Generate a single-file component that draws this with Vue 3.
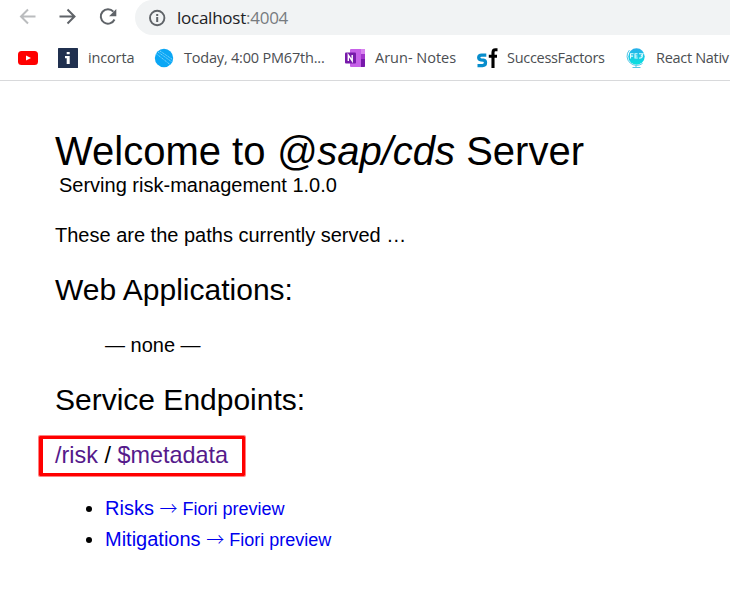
<script setup>
const services = ['Risks', 'Mitigations']
</script>

<template>
  <div class="window">
    <header class="chrome">
      <div class="toolbar">
        <svg class="nav" width="122" height="35" viewBox="0 0 122 35" fill="none" stroke-width="2">
          <path d="M35.5 16.5H21M28 9.5l-7 7 7 7" stroke="#babcbe" />
          <path d="M59.5 16.5H74M67.5 9.5l7 7-7 7" stroke="#5f6368" />
          <path d="M113.4 11.7A7.2 7.2 0 1 0 114.5 19.5" stroke="#5f6368" />
          <path d="M116.3 9v7.2h-7.2z" fill="#5f6368" />
        </svg>
        <div class="address">
          <svg width="18" height="18" viewBox="0 0 18 18">
            <circle cx="9.2" cy="9" r="7.2" fill="none" stroke="#5f6368" stroke-width="1.9" />
            <path d="M8.2 8h2v5h-2zM8.2 5h2v2h-2z" fill="#5f6368" />
          </svg>
          <span class="url">localhost<span class="port">:4004</span></span>
        </div>
      </div>
      <nav class="bookmarks">
        <svg class="youtube" width="20" height="20" viewBox="0 0 20 20">
          <rect y="3" width="20" height="14" rx="3.5" fill="#f00" />
          <path d="M8 7.4l5 2.6-5 2.6z" fill="#fff" />
        </svg>
        <a class="bookmark incorta">
          <svg width="20" height="20" viewBox="0 0 20 20">
            <rect width="20" height="20" rx=".5" fill="#20304f" />
            <path d="M8.7 4h3v2.3h-3zM7 8h4.7v8H8.7v-5.8H7z" fill="#fff" />
          </svg>
          <span>incorta</span>
        </a>
        <a class="bookmark today">
          <svg width="20" height="20" viewBox="0 0 20 20">
            <circle cx="10" cy="10" r="9.2" fill="#0ba7f5" />
            <g fill="none" stroke="#a5e2ff" stroke-width=".7" stroke-dasharray="1.3 .6">
              <path d="M2 5.5L16 16.5M4 4L18 14M6 3L18.5 11.5" />
            </g>
          </svg>
          <span>Today, 4:00 PM67th...</span>
        </a>
        <a class="bookmark notes">
          <svg width="20" height="20" viewBox="0 0 20 20">
            <rect x="5" y="1" width="15" height="18" rx="1" fill="#c660e8" />
            <path d="M16 1h3q1 0 1 1v4h-4z" fill="#d985ef" />
            <path d="M16 6h4v5h-4z" fill="#a336cc" />
            <path d="M16 11h4v7q0 1-1 1h-3z" fill="#7719aa" />
            <rect y="4.5" width="11" height="11" rx="1" fill="#7719aa" />
            <path d="M3.3 13V7l3.9 6V7" fill="none" stroke="#fff" stroke-width="1.4" />
          </svg>
          <span>Arun- Notes</span>
        </a>
        <a class="bookmark success">
          <svg width="21" height="20" viewBox="0 0 21 20">
            <path d="M9.3 7.2H4.6q-2.9 0-2.9 2.4 0 1.9 2.4 2.3l2.3.3q2.1.4 2.1 2.4 0 3-3 3H.5" fill="none" stroke="#078dcc" stroke-width="3.3" />
            <path d="M20.5 1.7h-2.1q-2.4 0-2.4 2.7V20M11.8 8.2h8.2" fill="none" stroke="#000" stroke-width="3.1" />
          </svg>
          <span>SuccessFactors</span>
        </a>
        <a class="bookmark react">
          <svg width="20" height="20" viewBox="0 0 20 20">
            <defs>
              <linearGradient id="globe" x2="0" y2="1">
                <stop stop-color="#28aeea" />
                <stop offset="1" stop-color="#08e3df" />
              </linearGradient>
            </defs>
            <circle cx="10.5" cy="8.5" r="8.2" fill="url(#globe)" />
            <path d="M3.4 2.1A9 9 0 0 0 4.2 15Q10 19.5 16.5 15.5M10 17v2.5M6.5 19.5h8" fill="none" stroke="#52c6e8" stroke-width="1" />
            <path d="M4.5 10.5V5.8H7.5M4.5 8.1h2.6M11.5 5.8H9v4.2h2.7M9 8h2.4M13 5.8h4l-1.6 1.9h1q0 2.4-3.2 2.4" fill="none" stroke="#dffcff" stroke-width="1.1" />
          </svg>
          <span>React Nativ</span>
        </a>
      </nav>
    </header>

    <main>
      <h1>Welcome to <i>@sap/cds</i> Server</h1>
      <p class="subtitle">Serving risk-management 1.0.0</p>
      <p class="intro">These are the paths currently served …</p>
      <h2 class="apps">Web Applications:</h2>
      <p class="none">— none —</p>
      <h2 class="endpoints">Service Endpoints:</h2>
      <h3><a>/risk</a> / <a>$metadata</a></h3>
      <ul>
        <li v-for="service in services" :key="service">
          <a>{{ service }}</a> <a class="preview"><span class="arrow">→</span> Fiori preview</a>
        </li>
      </ul>
    </main>
  </div>
</template>

<style>
body {
  margin: 0;
  background: #fff;
}
</style>

<style scoped>
.window {
  width: 730px;
  height: 590px;
  overflow: hidden;
  background: #fff;
  color: #000;
  font-family: "Liberation Sans", Arial, sans-serif;
}
.chrome {
  box-sizing: border-box;
  height: 81px;
  border-bottom: 1px solid #d8d9db;
  font-family: "Open Sans", "Noto Sans", sans-serif;
}
.toolbar {
  display: flex;
  height: 35px;
}
.nav {
  flex: none;
  margin-right: 13px;
}
.address {
  display: flex;
  flex: 1;
  align-items: center;
  gap: 11px;
  box-sizing: border-box;
  padding-left: 13px;
  border-radius: 18px 0 0 18px;
  background: #f1f3f4;
}
.url {
  color: #202124;
  font-size: 17px;
  line-height: 35px;
  letter-spacing: -0.25px;
}
.port {
  color: #777b7f;
}
.bookmarks {
  display: flex;
  align-items: center;
  height: 45px;
  padding-left: 18px;
  white-space: nowrap;
}
.youtube {
  flex: none;
  margin-right: 20px;
}
.bookmark {
  display: flex;
  flex: none;
  align-items: center;
  gap: 10px;
  color: #4b4e52;
  font-size: 14.5px;
  line-height: 20px;
  letter-spacing: -0.3px;
}
.bookmark svg {
  flex: none;
}
.incorta {
  width: 96px;
  letter-spacing: -0.15px;
}
.today {
  width: 191px;
  letter-spacing: -0.2px;
}
.notes {
  width: 132px;
  letter-spacing: 0;
}
.success {
  gap: 9px;
  width: 149px;
}
main {
  padding: 50px 55px 0;
}
h1,
h2,
h3,
p,
ul {
  margin: 0;
  font-weight: 400;
}
h1 {
  font-size: 40px;
  line-height: 40px;
}
p {
  font-size: 20px;
  line-height: 24px;
}
.subtitle {
  margin-top: 2px;
  padding-left: 4px;
}
.intro {
  margin-top: 26px;
}
h2 {
  font-size: 30px;
  line-height: 34px;
}
.apps {
  margin-top: 26px;
}
.none {
  margin-top: 26px;
  padding-left: 50px;
}
.endpoints {
  margin-top: 26px;
}
h3 {
  box-sizing: border-box;
  width: 206px;
  height: 40px;
  margin: 19px 0 0 -16px;
  padding-left: 12px;
  border: 3px solid #f00;
  border-left-width: 4px;
  border-radius: 1px;
  box-shadow: 0 0 0 1px #ff8080;
  font-size: 23.4px;
  line-height: 33px;
  white-space: nowrap;
}
h3 a {
  color: #551a8b;
}
ul {
  margin-top: 17px;
  padding-left: 50px;
  font-size: 20px;
  line-height: 31px;
}
li a {
  color: #0000ee;
}
.preview {
  font-size: 18px;
  line-height: 20px;
}
.arrow {
  font-family: "Noto Sans CJK JP", sans-serif;
  font-weight: 300;
  line-height: 1;
}
</style>
